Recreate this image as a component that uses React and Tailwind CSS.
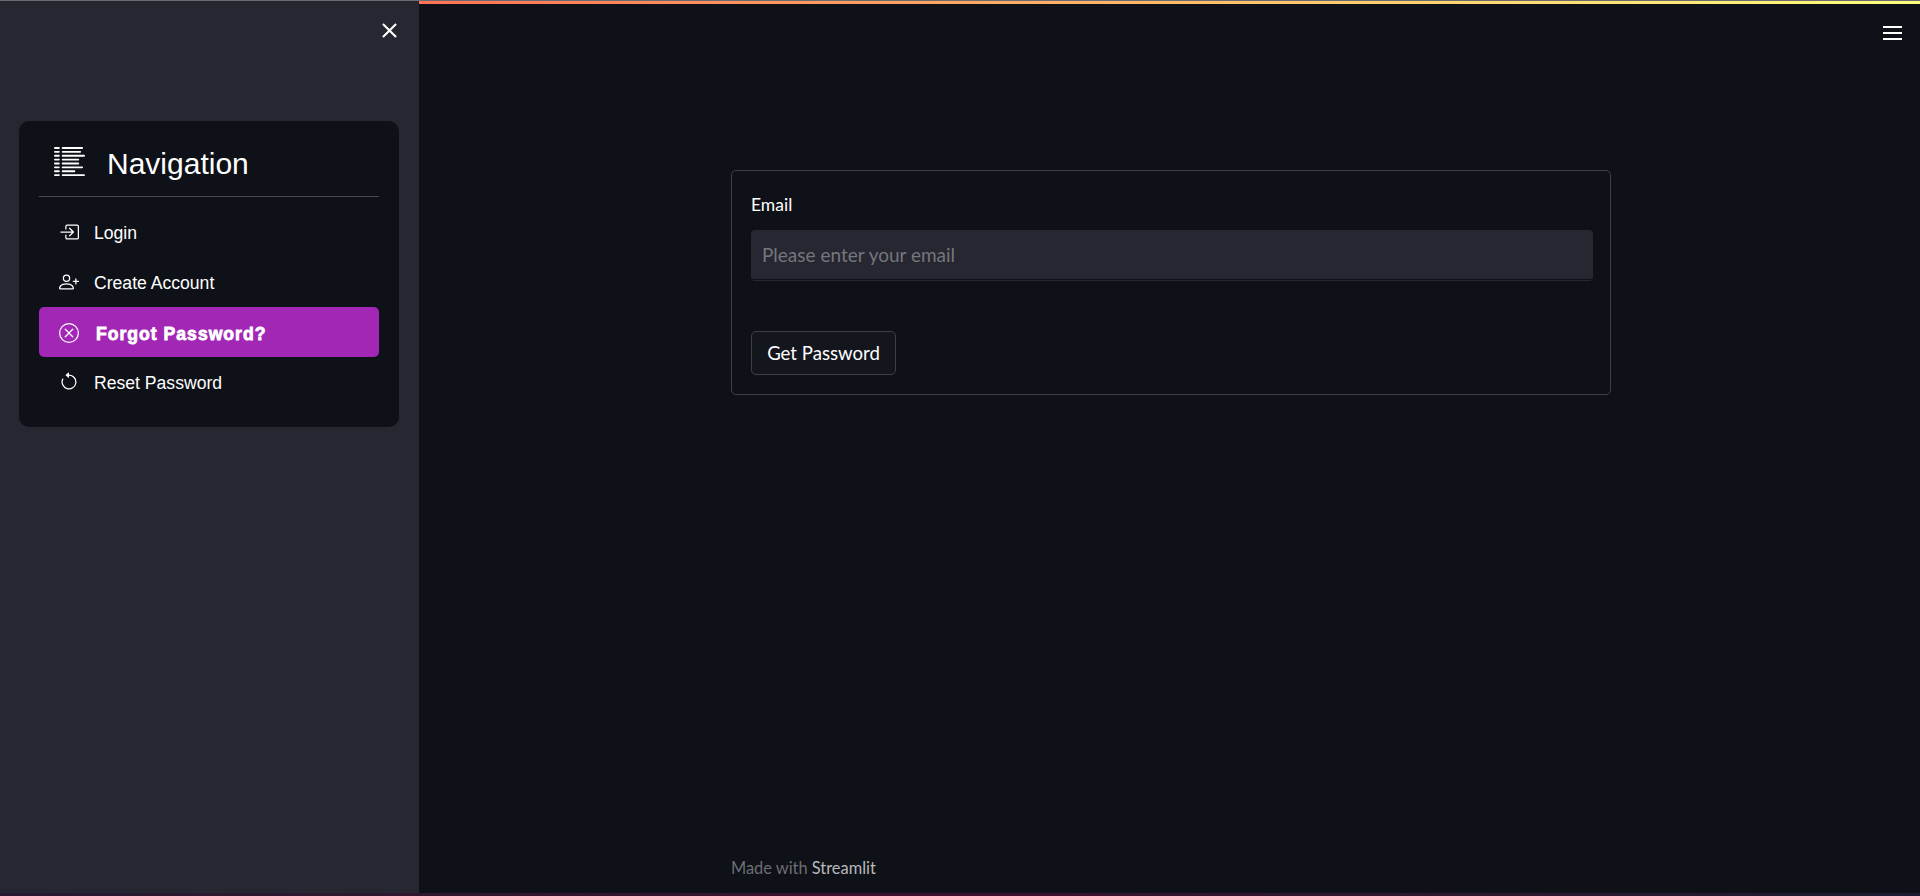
import React from "react";
import { MdClose } from "react-icons/md";
import {
  BsBoxArrowInRight,
  BsPersonPlus,
  BsXCircle,
  BsArrowCounterclockwise,
  BsListColumnsReverse,
} from "react-icons/bs";

const navItems = [
  { label: "Login", Icon: BsBoxArrowInRight },
  { label: "Create Account", Icon: BsPersonPlus },
  { label: "Forgot Password?", Icon: BsXCircle, active: true },
  { label: "Reset Password", Icon: BsArrowCounterclockwise },
];

export default function App() {
  return (
    <div className="flex flex-col h-[896px] w-full overflow-hidden bg-[#0e1117] text-white font-['Liberation_Sans',sans-serif]">
      <div className="h-px shrink-0 bg-[#6b6c70]" />
      <div className="flex flex-1 min-h-0">
        <aside className="w-[419px] shrink-0 bg-[#262730] flex flex-col">
          <div className="flex justify-end pt-[17px] pr-[17px] h-[120px]">
            <MdClose size={25} />
          </div>
          <div className="ml-[19px] mr-[20px] h-[306px] rounded-[10px] bg-[#0e1117] px-[20px] pt-[26px]">
            <div className="flex items-center h-[32px] pl-[15px] gap-[22px]">
              <BsListColumnsReverse size={31} className="-translate-y-px" />
              <span className="text-[30px] leading-none translate-y-px">Navigation</span>
            </div>
            <div className="mt-[17px] h-px bg-[#4a4b50]" />
            <div className="mt-[10px] flex flex-col">
              {navItems.map(({ label, Icon, active }) => (
                <div
                  key={label}
                  className={`flex items-center h-[50px] rounded-[5px] ${active ? "bg-[#a127b4] pt-[2px]" : ""}`}
                >
                  <span className="w-[55px] pl-[20px] shrink-0">
                    <Icon size={20} />
                  </span>
                  <span
                    className={
                      active
                        ? "pt-[2px] text-[17.6px] font-black [-webkit-text-stroke:0.8px_white] tracking-[1px] ml-[2px]"
                        : "pt-[2px] text-[17.6px]"
                    }
                  >
                    {label}
                  </span>
                </div>
              ))}
            </div>
          </div>
        </aside>

        <main className="relative flex-1 font-['Lato',sans-serif]">
          <div className="h-[3px] bg-gradient-to-r from-[#ff7256] to-[#ffff7d]" />
          <div className="absolute right-[18px] top-[25px] flex flex-col gap-[4px]">
            <div className="w-[19px] h-[2px] bg-white" />
            <div className="w-[19px] h-[2px] bg-white" />
            <div className="w-[19px] h-[2px] bg-white" />
          </div>

          <div className="ml-[312px] mt-[166px] w-[880px] h-[225px] rounded-[5px] border border-[#3f4046] pl-[19px] pr-[17px] pt-[23px]">
            <div className="text-[17.5px] leading-[22px]">Email</div>
            <div className="mt-[14px] h-[51px] rounded-[4px] bg-[#262730] flex flex-col pb-px">
              <div className="flex-1 border-b border-[#0e1117] px-[11px] pt-[1px] flex items-center text-[19px] text-[#75767d]">
                Please enter your email
              </div>
            </div>
            <button className="mt-[50px] h-[44px] w-[145px] rounded-[5px] border border-[#3f4046] bg-[#13161d] pt-[2px] text-[18.6px]">
              Get Password
            </button>
          </div>

          <div className="absolute left-[312px] top-[855px] text-[16.4px] text-[#6d6e73]">
            Made with <span className="text-[#b9b9bb]">Streamlit</span>
          </div>
        </main>
      </div>
      <div className="h-[3px] shrink-0 bg-gradient-to-r from-[#281a30] via-[#3c1030] to-[#1c1c30]" />
    </div>
  );
}
